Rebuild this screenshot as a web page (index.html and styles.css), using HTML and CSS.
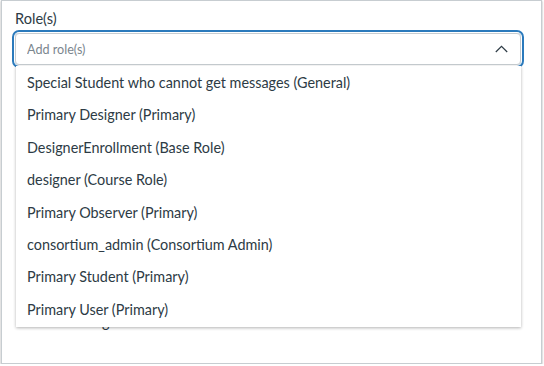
FILE: index.html
```html
<!DOCTYPE html>
<html lang="en">
<head>
    <meta charset="UTF-8">
    <title>Role(s)</title>
    <link rel="stylesheet" href="styles.css">
</head>
<body>
    <div class="dialog">
        <label class="field-label" for="roles">Role(s)</label>
        <div class="select">
            <div class="select-input">
                <input id="roles" type="text" placeholder="Add role(s)">
                <svg class="chevron" width="13" height="8" viewBox="0 0 13 8">
                    <path d="M0.8 7 L6.5 1.3 L12.2 7" fill="none" stroke="#2d3b45" stroke-width="1.2"/>
                </svg>
            </div>
            <ul class="menu">
                <li>Special Student who cannot get messages (General)</li>
                <li>Primary Designer (Primary)</li>
                <li>DesignerEnrollment (Base Role)</li>
                <li>designer (Course Role)</li>
                <li>Primary Observer (Primary)</li>
                <li>consortium_admin (Consortium Admin)</li>
                <li>Primary Student (Primary)</li>
                <li>Primary User (Primary)</li>
            </ul>
        </div>
        <p class="note">Limit messages</p>
    </div>
</body>
</html>
```

FILE: styles.css
```css
body {
    margin: 0;
    font-family: 'Lato', 'Noto Sans', sans-serif;
    color: #2d3b45;
    background: #fff;
}

/* Modal body */
.dialog {
    box-sizing: border-box;
    height: 364px;
    margin: 0 2px 0 1px;
    padding: 8px 20px 0 13px;
    border: 1px solid #c7cdd1;
    box-shadow: 0 1px 2px rgba(0,0,0,0.35);
    overflow: hidden;
}

.field-label {
    display: block;
    font-size: 14.6px;
    line-height: 20px;
    margin-bottom: 4px;
}

/* Select */
.select {
    position: relative;
}

.select-input {
    box-sizing: border-box;
    height: 32px;
    display: flex;
    align-items: center;
    border: 1px solid #c7cdd1;
    border-radius: 4px;
    box-shadow: 0 0 0 1px #fff, 0 0 0 3px #2b7abc;
    padding: 0 12px 0 11px;
}

.select-input input {
    flex: 1;
    border: 0;
    outline: 0;
    padding: 0;
    font: inherit;
    font-size: 12.6px;
    color: #2d3b45;
    background: transparent;
}

.select-input input::placeholder {
    color: #7b868e;
}

.chevron {
    display: block;
}

.menu {
    position: absolute;
    top: 33px;
    left: 1px;
    right: 0;
    z-index: 5;
    margin: 0;
    padding: 1px 0;
    list-style: none;
    background: #fff;
    box-shadow: 0 1px 3px rgba(0,0,0,0.3);
}

.menu li {
    height: 32.4px;
    line-height: 32.4px;
    padding: 0 11px;
    font-size: 14.4px;
    white-space: nowrap;
}

.note {
    margin: 247px 0 0 13px;
    font-size: 14.4px;
    line-height: 20px;
}
```
